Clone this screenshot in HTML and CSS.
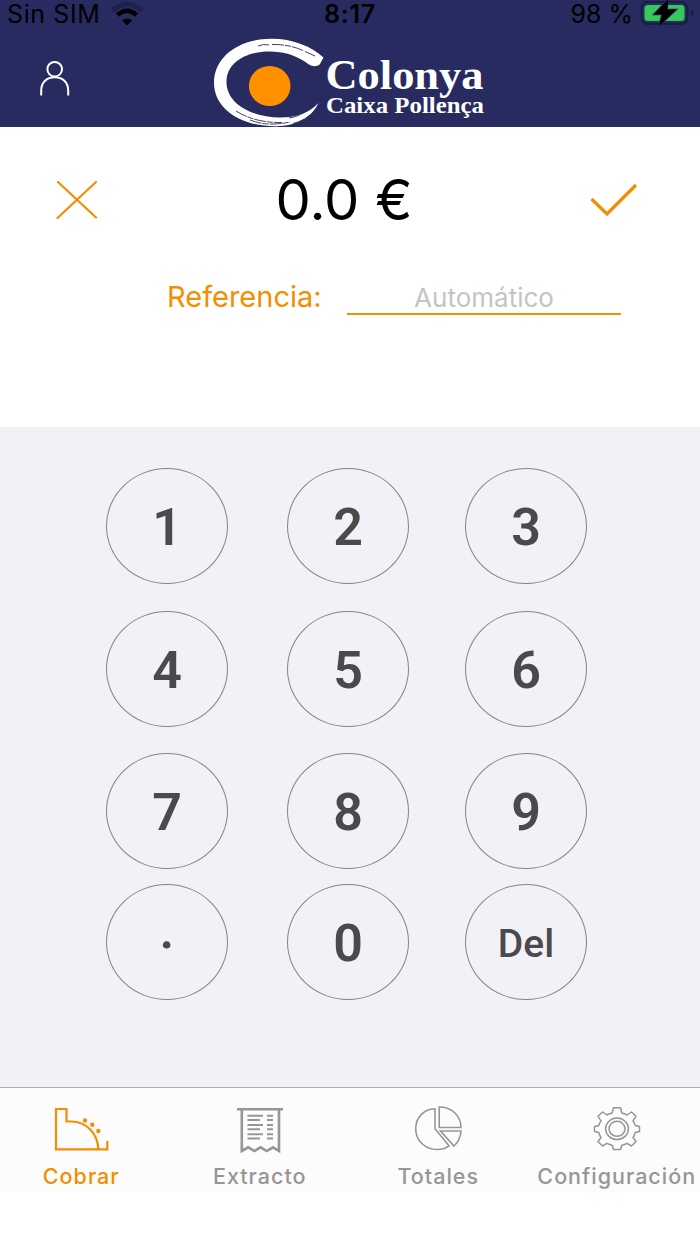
FILE: index.html
```html
<!DOCTYPE html>
<html lang="es">
<head>
<meta charset="utf-8">
<title>Colonya</title>
<link rel="stylesheet" href="styles.css">
</head>
<body>
<div class="app">
  <header class="header">
    <div class="status">
      <div class="status-left">
        <span class="carrier">Sin SIM</span>
        <svg class="wifi" width="34" height="24" viewBox="0 0 34 24">
          <path d="M2.2 9.8Q17-3.300 31.800 9.800" fill="none" stroke="#1e214c" stroke-width="5"/>
          <path d="M7.400 14Q17 5.500 26.600 14" fill="none" stroke="#000" stroke-width="4.500"/>
          <path d="M12 19.500Q17 15.500 22 19.500L17 24.500Z" fill="#000"/>
        </svg>
      </div>
      <span class="clock">8:17</span>
      <div class="status-right">
        <span class="percent">98 %</span>
        <svg class="battery" width="54" height="27" viewBox="0 0 54 27">
          <rect x="1.500" y="2" width="46" height="22" rx="6" fill="none" stroke="#1a1c43" stroke-width="2"/>
          <rect x="4.500" y="5" width="40" height="16" rx="3.500" fill="#35c85a"/>
          <path d="M51 9.500q2.500 1 2.500 3.500t-2.500 3.500z" fill="#1a1c43"/>
          <path d="M28.500-1L13.500 14.500H22L19 26L36.500 9.500H27Z" fill="#000" stroke="#282b60" stroke-width="1.500" paint-order="stroke"/>
        </svg>
      </div>
    </div>
    <div class="nav">
      <svg class="user" width="34" height="38" viewBox="0 0 34 38" fill="none" stroke="#fff" stroke-width="2">
        <circle cx="16.700" cy="9.200" r="7.300"/>
        <path d="M3.200 35.500V30.500C3.200 22 9 17.200 16.700 17.200S30.200 22 30.200 30.500V35.500"/>
      </svg>
      <svg class="logo" width="280" height="91" viewBox="210 36 280 91">
        <path d="M323.500 57.500C311 46 292 38.500 271 38.700C238 39 214 57 214 83C214 108 240 126.500 276 126.200C297 126 312 117 318.500 103C309 113 297 117.500 280 117.500C250 117 226.500 103 226.500 82C226.500 62 247 51 271 51.500C289 52 300 58 309 64.500C313 67 318 66.500 320 64Z" fill="#fff"/>
        <path d="M258 46Q264 43.500 269 45M272 44.500C283 44.300 293 46 303 50.500M305 51.500L315 56M236 111Q255 123 282 122.500M250 120Q267 127 290 122M289 118Q299 117 307 110M293 123.500Q302 121.500 310 115" fill="none" stroke="#282b60" stroke-width=".9" stroke-dasharray="12 1 6 1"/>
        <ellipse cx="269.700" cy="86" rx="20.800" ry="20" fill="#ff9100"/>
        <text class="brand" x="325.500" y="88.500" font-size="42" textLength="158" lengthAdjust="spacingAndGlyphs">Colonya</text>
        <text class="brand" x="326" y="112.500" font-size="23" textLength="158" lengthAdjust="spacingAndGlyphs">Caixa Pollença</text>
      </svg>
    </div>
  </header>

  <main class="entry">
    <div class="amount-row">
      <svg width="42" height="40" viewBox="0 0 42 40" fill="none" stroke="#f28e00" stroke-width="2.200" stroke-linecap="round"><path d="M2 2L40 37.500M40 2L1.500 38"/></svg>
      <span class="amount">0.0 €</span>
      <svg width="48" height="36" viewBox="0 0 48 36" fill="none" stroke="#f28e00" stroke-width="3.300"><path d="M1.500 17L17 32L46 3"/></svg>
    </div>
    <div class="ref-row">
      <span class="ref-label">Referencia:</span>
      <span class="ref-field">Automático</span>
    </div>
  </main>

  <section class="keypad">
    <div class="keys">
      <div class="key">1</div><div class="key">2</div><div class="key">3</div>
      <div class="key">4</div><div class="key">5</div><div class="key">6</div>
      <div class="key">7</div><div class="key">8</div><div class="key">9</div>
      <div class="key"><span class="dot">.</span></div><div class="key">0</div><div class="key"><span class="del">Del</span></div>
    </div>
  </section>

  <nav class="tabs">
    <div class="tab active">
      <svg width="56" height="50" viewBox="53 1104 56 50" fill="none" stroke="currentColor" stroke-width="2.200">
        <path d="M98.500 1149.300H56V1109H66.500V1121.500H71C87 1121.500 98 1134 98.300 1149.300H107.300V1141"/>
        <g fill="currentColor" stroke="none"><circle cx="85" cy="1120.500" r="2.200"/><circle cx="92.300" cy="1124.700" r="2.200"/><circle cx="98.300" cy="1131" r="2.200"/></g>
      </svg>
      <span class="label cobrar">Cobrar</span>
    </div>
    <div class="tab">
      <svg width="50" height="50" viewBox="233 1104 50 50" fill="none" stroke="currentColor" stroke-width="2">
        <path d="M235 1109.200H281" stroke-width="2.600"/>
        <path d="M239.800 1109V1151L246.300 1147.300L252.500 1151L258.500 1147.300L264.800 1151L271 1147.300L277 1151V1109" stroke-width="2.600"/>
        <path d="M245.500 1115.800H261M245.500 1120H258M245.500 1125H261M245.500 1129.200H258M245.500 1134.300H261M245.500 1138.500H258M265 1115.800H271M265 1120H271M265 1125H271M265 1129.200H271M265 1134.300H271M265 1138.500H271"/>
      </svg>
      <span class="label extracto">Extracto</span>
    </div>
    <div class="tab">
      <svg width="50" height="50" viewBox="412 1104 50 50" fill="none" stroke="currentColor" stroke-width="1.600">
        <path d="M434 1108.800C423 1109 414.700 1117.500 414.700 1128.700C414.700 1140.500 424 1149.500 436 1149.500Q443 1149.500 448 1145.800L434 1128.700Z"/>
        <path d="M438.200 1107V1127.500H460C460 1115.500 450.500 1107 438.200 1107Z"/>
        <path d="M439.500 1131H460Q459.500 1140 453 1146Z"/>
      </svg>
      <span class="label totales">Totales</span>
    </div>
    <div class="tab">
      <svg width="50" height="50" viewBox="590 1104 50 50" fill="none" stroke="currentColor" stroke-width="1.500" stroke-linejoin="round">
        <path d="M611.500 1107.700H618.500L619.800 1113Q622.500 1113.600 625 1115L629.500 1112L634 1116.300L631 1120.800Q632.600 1123.200 633.200 1125.500L637.500 1126.500V1131.500L633.200 1132.500Q632.500 1135.500 631 1137.500L634 1141.500L629.500 1146L625 1143.300Q622.500 1144.700 619.800 1145.200L618.500 1149.500H611.500L610.200 1145.200Q607.500 1144.700 605 1143.300L600.500 1146L596 1141.500L599 1137.500Q597.500 1135.500 596.800 1132.500L592.500 1131.500V1126.500L596.800 1125.500Q597.400 1123.200 599 1120.800L596 1116.300L600.500 1112L605 1115Q607.500 1113.600 610.200 1113Z"/>
        <ellipse cx="615" cy="1128.800" rx="11.400" ry="10.700"/><ellipse cx="615" cy="1128.800" rx="8" ry="7.500"/>
      </svg>
      <span class="label config">Configuración</span>
    </div>
  </nav>
</div>
</body>
</html>
```

FILE: styles.css
```css
* { box-sizing: border-box; }
body { margin: 0; background: #fff; font-family: Inter, "Liberation Sans", sans-serif; }
svg { display: block; flex: none; }
span { white-space: nowrap; }
.app { width: 700px; height: 1244px; overflow: hidden; display: flex; flex-direction: column; }

.header { height: 127px; background: #282b60; display: flex; flex-direction: column; }
.status { height: 28px; display: grid; grid-template-columns: 1fr auto 1fr; font-size: 25px; line-height: 28px; color: #000; }
.status-left { display: flex; padding-left: 7px; gap: 10px; }
.carrier { letter-spacing: 0.6px; }
.wifi { margin-top: 1px; }
.clock { font-weight: 600; letter-spacing: 0.8px; }
.status-right { display: flex; justify-content: flex-end; gap: 7px; padding-right: 6px; }
.nav { height: 99px; display: flex; align-items: flex-start; padding: 8px 0 0 38px; }
.user { margin-top: 24px; }
.logo { margin-left: 138px; }
.brand { font-family: "Liberation Serif", serif; font-weight: 700; fill: #fff; }

.entry { height: 300px; background: #fff; padding-top: 38px; }
.amount-row { height: 70px; display: flex; align-items: center; justify-content: space-between; padding: 0 62px 0 56px; }
.amount { font-size: 56px; line-height: 70px; }
.ref-row { display: flex; margin-top: 42px; padding-left: 167px; }
.ref-label { width: 180px; font-size: 29px; line-height: 40px; color: #f28e00; }
.ref-field { width: 274px; height: 38px; border-bottom: 2px solid #f28e00; text-align: center; color: #c4c4c6; font-size: 26px; line-height: 41px; }

.keypad { height: 660px; background: #f2f1f7; padding: 41px 0 0 106px; }
.keys { display: grid; grid-template-columns: 181px 178px 122px; grid-template-rows: 143px 142px 131px 116px; }
.key { width: 122px; height: 116px; border: 1px solid #858587; border-radius: 50%; display: flex; align-items: center; justify-content: center; font-family: Roboto, sans-serif; font-weight: 600; font-size: 52px; color: #4a4a4a; padding-top: 3px; }
.del { font-size: 39px; font-weight: 500; }
.dot { line-height: 1; margin-top: -26px; }

.tabs { height: 105px; width: 714px; margin-left: -8px; display: grid; grid-template-columns: repeat(4, 178.500px); background: #fcfcfc; border-top: 1px solid #b0b0b4; }
.tab { display: flex; flex-direction: column; align-items: center; padding-top: 16px; color: #969696; }
.label { margin-top: 8px; font-size: 21.500px; line-height: 28px; font-weight: 500; letter-spacing: 1px; }
.active { color: #f28e00; }
```
